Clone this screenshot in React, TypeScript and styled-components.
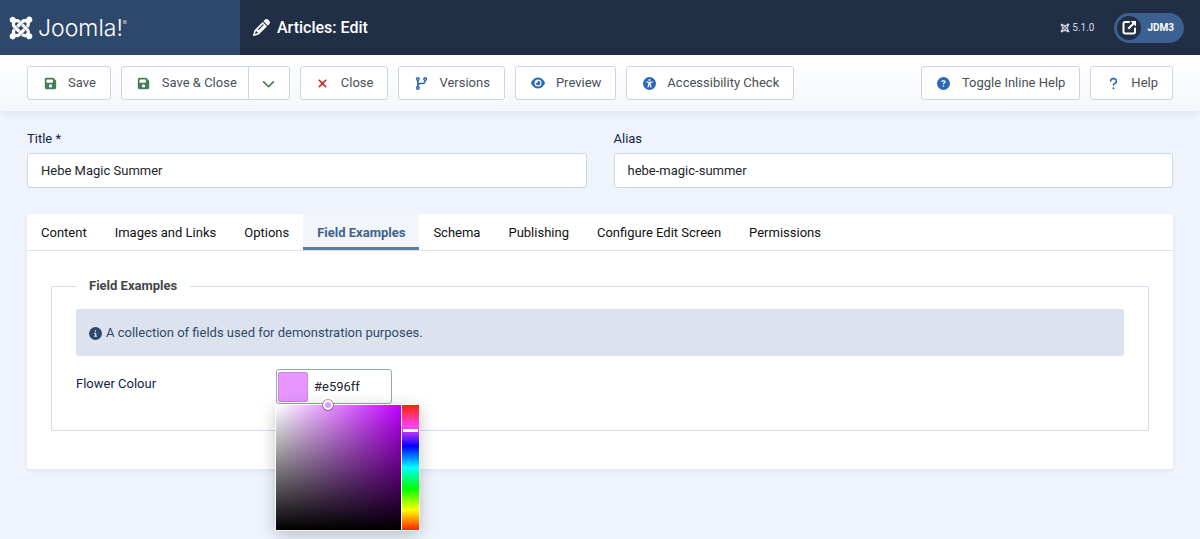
import React from "react";
import styled, { createGlobalStyle } from "styled-components";
import {
  FaJoomla,
  FaPencil,
  FaFloppyDisk,
  FaChevronDown,
  FaXmark,
  FaCodeBranch,
  FaEye,
  FaUniversalAccess,
  FaCircleQuestion,
  FaQuestion,
  FaCircleInfo,
} from "react-icons/fa6";

const GlobalStyle = createGlobalStyle`
  *, *::before, *::after { box-sizing: border-box; }
  body {
    margin: 0;
    background: #eff4fc;
    color: #22262a;
    font-family: Roboto, "Liberation Sans", sans-serif;
    font-size: 13px;
    line-height: 20px;
  }
  button, input { font: inherit; color: inherit; }
`;

const Page = styled.div`
  min-height: 100vh;
`;

const Header = styled.header`
  display: flex;
  align-items: center;
  height: 55px;
  background: #202f46;
  color: #fff;
`;

const Brand = styled.a`
  display: flex;
  align-items: center;
  align-self: stretch;
  gap: 4px;
  flex: 0 0 240px;
  padding-left: 8px;
  background: #2e486b;
  color: #fff;
  text-decoration: none;
`;

const Wordmark = styled.span`
  font-family: Inter, sans-serif;
  font-weight: 300;
  font-size: 23px;
  line-height: 28px;
`;

const Registered = styled.sup`
  font-size: 6px;
  line-height: 6px;
  vertical-align: 11px;
`;

const PageTitle = styled.h1`
  display: flex;
  align-items: center;
  gap: 7px;
  flex: 1;
  margin: 0;
  padding-left: 13px;
  font-size: 16px;
  font-weight: 500;
  line-height: 20px;
`;

const Version = styled.div`
  display: flex;
  align-items: center;
  gap: 2px;
  margin-right: 20px;
  font-size: 10px;
  color: #d3d8e0;
`;

const SiteLink = styled.a`
  display: flex;
  align-items: center;
  gap: 6px;
  height: 30px;
  margin-right: 16px;
  padding: 0 10px 0 3px;
  border-radius: 15px;
  background: #3c6090;
  color: #fff;
  font-size: 10px;
  font-weight: 700;
  text-decoration: none;
`;

const SiteIcon = styled.span`
  display: grid;
  place-items: center;
  width: 24px;
  height: 24px;
  border-radius: 50%;
  background: #202f46;
`;

const Toolbar = styled.div`
  display: flex;
  gap: 10px;
  padding: 11px 27px;
  background: linear-gradient(#fff, #f4f7fb);
  box-shadow: 0 2px 8px rgba(40, 80, 140, 0.1);
`;

const Spacer = styled.div`
  flex: 1;
`;

const ToolButton = styled.button`
  display: flex;
  align-items: center;
  gap: 10px;
  height: 34px;
  padding: 0 14px;
  border: 1px solid #cdd5e2;
  border-radius: 3px;
  background: #fff;
  color: #495057;
  white-space: nowrap;
`;

const IconBox = styled.span<{ $color: string }>`
  display: flex;
  justify-content: center;
  width: 16px;
  color: ${(p) => p.$color};
`;

const Split = styled.div`
  display: flex;

  ${ToolButton}:first-child {
    padding-right: 11px;
    border-radius: 3px 0 0 3px;
  }
  ${ToolButton}:last-child {
    width: 42px;
    margin-left: -1px;
    padding: 0 12px;
    border-radius: 0 3px 3px 0;
  }
`;

const Main = styled.main`
  padding: 18px 27px 0;
`;

const TitleRow = styled.div`
  display: grid;
  grid-template-columns: 1fr 1fr;
  gap: 27px;
`;

const Field = styled.div`
  display: flex;
  flex-direction: column;
  gap: 4px;
`;

const Label = styled.label`
  color: #152248;
`;

const TextInput = styled.input`
  width: 100%;
  height: 35px;
  padding: 0 13px;
  border: 1px solid #c9d7e8;
  border-radius: 3px;
  background: #fff;
  outline: none;
`;

const Panel = styled.section`
  margin-top: 26px;
  border-radius: 3px;
  background: #fff;
  box-shadow: 0 2px 4px rgba(40, 80, 140, 0.08);
`;

const TabList = styled.div`
  display: flex;
  border-bottom: 1px solid #dce3ef;
`;

const Tab = styled.button<{ $active?: boolean }>`
  height: 36px;
  padding: 4px 14px 0;
  border: 0;
  border-bottom: 3px solid ${(p) => (p.$active ? "#5c7dab" : "transparent")};
  background: ${(p) => (p.$active ? "#f2f6fa" : "transparent")};
  color: ${(p) => (p.$active ? "#41618f" : "#111")};
  font-weight: ${(p) => (p.$active ? 700 : 400)};
`;

const TabBody = styled.div`
  padding: 25px 24px 38px;
`;

const Fieldset = styled.fieldset`
  margin: 0;
  padding: 13px 24px 26px;
  border: 1px solid #d3ddec;
`;

const Legend = styled.legend`
  padding: 0 13px;
  color: #41464c;
  font-weight: 700;
`;

const Notice = styled.div`
  display: flex;
  align-items: center;
  gap: 4px;
  padding: 14px 13px 13px;
  border-radius: 3px;
  background: #dce3ef;
  color: #2e486b;
`;

const ControlRow = styled.div`
  display: flex;
  align-items: flex-start;
  margin-top: 13px;

  ${Label} {
    flex: 0 0 200px;
    padding-top: 5px;
  }
`;

const ColorControl = styled.div`
  position: relative;
  width: 116px;
`;

const ColorInput = styled(TextInput)`
  display: block;
  padding: 0 4px 0 37px;
  border-color: #8fae97;
`;

const Swatch = styled.span`
  position: absolute;
  top: 3px;
  left: 2px;
  width: 30px;
  height: 30px;
  border: 1px solid #cd87e5;
  border-radius: 2px;
  background: #e596ff;
`;

const Picker = styled.div`
  position: absolute;
  top: 36px;
  left: 0;
  display: grid;
  grid-template-columns: 125px 17px;
  gap: 1px;
  height: 125px;
  background: #fff;
  box-shadow: 0 0 0 1px rgba(255, 255, 255, 0.8), 0 4px 16px rgba(0, 0, 0, 0.25);
`;

const Shade = styled.div`
  position: relative;
  background: linear-gradient(transparent, #000), linear-gradient(to right, #fff, #bf00ff);
`;

const ShadeHandle = styled.span`
  position: absolute;
  top: -5px;
  left: 47px;
  width: 10px;
  height: 10px;
  border: 2px solid #fff;
  border-radius: 50%;
  background: #e596ff;
  box-shadow: 0 0 0 1px rgba(0, 0, 0, 0.35);
`;

const Hue = styled.div`
  position: relative;
  background: linear-gradient(#f20 0%, #f4f 18%, #00f 33%, #0ff 50%, #0f0 67%, #ff0 84%, #f20 100%);
`;

const HueHandle = styled.span`
  position: absolute;
  top: 24px;
  left: 1px;
  right: 1px;
  height: 3px;
  background: #fff;
  box-shadow: 0 0 1px rgba(0, 0, 0, 0.4);
`;

const ExternalIcon = () => (
  <svg width="15" height="15" viewBox="0 0 15 15" fill="none" stroke="#fff" strokeWidth="2" aria-hidden="true">
    <path d="M7 2H3.2Q1.5 2 1.5 3.7v8.1q0 1.7 1.7 1.7h8.1q1.7 0 1.7-1.7V8.5" strokeLinecap="round" />
    <path d="M6.3 8.7 12 3" />
    <path d="M8.5 1H14v5.5Z" fill="#fff" stroke="none" />
  </svg>
);

const green = "#457d54";
const blue = "#2a69b8";
const red = "#c52827";

type ToolProps = { icon: React.ReactNode; color: string; children: React.ReactNode };

const Tool = ({ icon, color, children }: ToolProps) => (
  <ToolButton type="button">
    <IconBox $color={color}>{icon}</IconBox>
    {children}
  </ToolButton>
);

const tabs = [
  "Content",
  "Images and Links",
  "Options",
  "Field Examples",
  "Schema",
  "Publishing",
  "Configure Edit Screen",
  "Permissions",
];

export default function App() {
  return (
    <Page>
      <GlobalStyle />
      <Header>
        <Brand href="#">
          <FaJoomla size={26} />
          <Wordmark>
            Joomla!<Registered>®</Registered>
          </Wordmark>
        </Brand>
        <PageTitle>
          <FaPencil size={17} />
          Articles: Edit
        </PageTitle>
        <Version>
          <FaJoomla size={10} />
          5.1.0
        </Version>
        <SiteLink href="#">
          <SiteIcon>
            <ExternalIcon />
          </SiteIcon>
          JDM3
        </SiteLink>
      </Header>
      <Toolbar>
        <Tool icon={<FaFloppyDisk size={13} />} color={green}>Save</Tool>
        <Split>
          <Tool icon={<FaFloppyDisk size={13} />} color={green}>Save &amp; Close</Tool>
          <ToolButton type="button" aria-label="More save options">
            <IconBox $color={green}>
              <FaChevronDown size={13} />
            </IconBox>
          </ToolButton>
        </Split>
        <Tool icon={<FaXmark size={13} />} color={red}>Close</Tool>
        <Tool icon={<FaCodeBranch size={13} />} color={blue}>Versions</Tool>
        <Tool icon={<FaEye size={14} />} color={blue}>Preview</Tool>
        <Tool icon={<FaUniversalAccess size={13} />} color={blue}>Accessibility Check</Tool>
        <Spacer />
        <Tool icon={<FaCircleQuestion size={13} />} color={blue}>Toggle Inline Help</Tool>
        <Tool icon={<FaQuestion size={13} />} color={blue}>Help</Tool>
      </Toolbar>
      <Main>
        <TitleRow>
          <Field>
            <Label htmlFor="title">Title *</Label>
            <TextInput id="title" defaultValue="Hebe Magic Summer" />
          </Field>
          <Field>
            <Label htmlFor="alias">Alias</Label>
            <TextInput id="alias" defaultValue="hebe-magic-summer" />
          </Field>
        </TitleRow>
        <Panel>
          <TabList role="tablist">
            {tabs.map((name) => {
              const active = name === "Field Examples";
              return (
                <Tab key={name} type="button" role="tab" aria-selected={active} $active={active}>
                  {name}
                </Tab>
              );
            })}
          </TabList>
          <TabBody role="tabpanel">
            <Fieldset>
              <Legend>Field Examples</Legend>
              <Notice>
                <FaCircleInfo size={13} />
                A collection of fields used for demonstration purposes.
              </Notice>
              <ControlRow>
                <Label htmlFor="flower">Flower Colour</Label>
                <ColorControl>
                  <ColorInput id="flower" defaultValue="#e596ff" />
                  <Swatch />
                  <Picker>
                    <Shade>
                      <ShadeHandle />
                    </Shade>
                    <Hue>
                      <HueHandle />
                    </Hue>
                  </Picker>
                </ColorControl>
              </ControlRow>
            </Fieldset>
          </TabBody>
        </Panel>
      </Main>
    </Page>
  );
}
